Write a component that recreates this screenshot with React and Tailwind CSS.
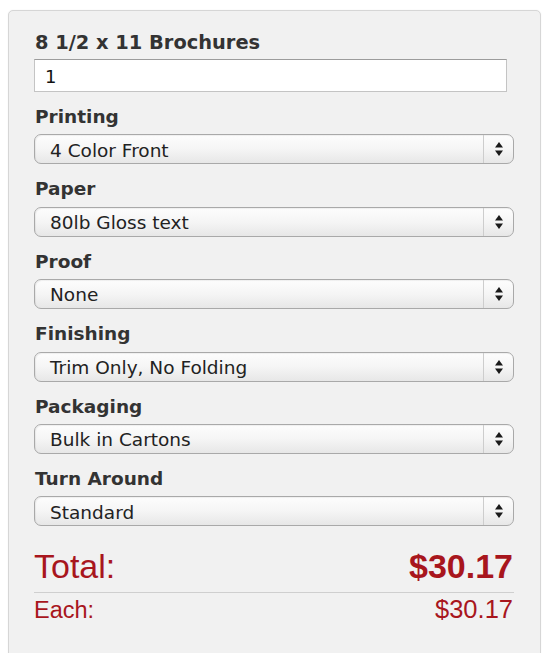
import React from "react";

const fields = [
  { label: "Printing", value: "4 Color Front" },
  { label: "Paper", value: "80lb Gloss text" },
  { label: "Proof", value: "None" },
  { label: "Finishing", value: "Trim Only, No Folding" },
  { label: "Packaging", value: "Bulk in Cartons" },
  { label: "Turn Around", value: "Standard" },
];

const Arrows = () => (
  <svg width="10" height="16" viewBox="0 0 10 16">
    <path d="M5 1 L9 6.5 L1 6.5 Z" fill="#1a1a1a" />
    <path d="M5 15 L9 9.5 L1 9.5 Z" fill="#1a1a1a" />
  </svg>
);

// mac style popup select
const SelectBox = ({ value }) => (
  <div className="mt-[6.4px] h-[30px] flex items-stretch rounded-[7px] border border-[#a9a9a9] bg-linear-to-b from-[#fdfdfd] via-[#f5f5f5] to-[#e7e7e7] shadow-[inset_1px_1px_1px_rgba(0,0,0,0.06)]">
    <div className="flex-1 flex items-center pl-[15px] pt-[3px] text-[18.5px] text-[#222] leading-none">{value}</div>
    <div className="w-[30px] flex items-center justify-center border-l border-[#cdcdcd]">
      <Arrows />
    </div>
  </div>
);

export default function App() {
  return (
    <div className="h-[653px] bg-white pt-[10px] pl-[8px] overflow-hidden" style={{ fontFamily: '"DejaVu Sans", sans-serif' }}>
      <div className="w-[533px] h-[660px] bg-[#f1f1f1] border border-[#d6d6d6] rounded-[5px] pl-[25px] pr-[26px] pt-[21px] shadow-[0_0_2px_rgba(0,0,0,0.06)]">
        <div className="pl-[1px] text-[19.4px] leading-[22px] font-bold text-[#333]">8 1/2 x 11 Brochures</div>
        <div className="mt-[5px] w-[473px] h-[33px] bg-white border border-[#c4c4c4] border-t-[#9c9c9c] flex items-center pl-[10px] pt-[2px] text-[18px] text-[#111]">
          1
        </div>

        {fields.map((f) => (
          <div key={f.label}>
            <div className="mt-[14px] pl-[1px] text-[18.5px] leading-[22px] font-bold text-[#333]">{f.label}</div>
            <SelectBox value={f.value} />
          </div>
        ))}

        <div style={{ fontFamily: '"Liberation Sans", Arial, sans-serif' }} className="text-[#a8161d]">
          <div className="mt-[21px] pb-[7px] border-b border-[#cfcfcf] flex justify-between items-baseline">
            <span className="text-[34px] leading-[38px]">Total:</span>
            <span className="text-[34px] leading-[38px] font-bold pr-[1px]">$30.17</span>
          </div>
          <div className="mt-[1.5px] flex justify-between items-baseline">
            <span className="text-[23.5px] leading-[28px]">Each:</span>
            <span className="text-[25.5px] leading-[28px] pr-[1px]">$30.17</span>
          </div>
        </div>
      </div>
    </div>
  );
}
